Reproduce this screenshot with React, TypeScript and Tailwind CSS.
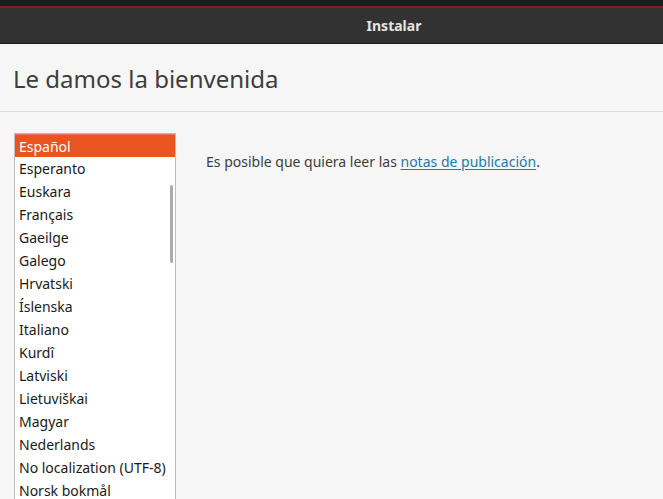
import React from "react";

const langs = [
  "Español",
  "Esperanto",
  "Euskara",
  "Français",
  "Gaeilge",
  "Galego",
  "Hrvatski",
  "Íslenska",
  "Italiano",
  "Kurdî",
  "Latviski",
  "Lietuviškai",
  "Magyar",
  "Nederlands",
  "No localization (UTF-8)",
  "Norsk bokmål",
  "Norsk nynorsk",
];

export default function App() {
  return (
    <div
      className="w-[663px] h-[499px] overflow-hidden flex flex-col bg-[#f6f6f6]"
      style={{ fontFamily: '"Noto Sans", "Open Sans", sans-serif' }}
    >
      <div className="h-[6px] bg-[#1d1d1d] shrink-0" />
      <div className="h-[2px] bg-[#7d1f22] shrink-0" />
      <div className="h-[36px] shrink-0 bg-[#323232] border-b border-[#1c1c1c] flex items-center overflow-hidden">
        <div className="w-[788px] shrink-0 text-center text-[14px] font-bold text-[#e4e4e4]">
          Instalar
        </div>
      </div>
      <div className="h-[68px] shrink-0 border-b border-[#dcdcdc] flex items-center pl-[13px] pt-[2px]">
        <h1 className="text-[24px] text-[#3d3d3d] font-normal">Le damos la bienvenida</h1>
      </div>
      <div className="flex items-start shrink-0 pt-[21px] pl-[14px]">
        <div className="relative w-[162px] h-[420px] shrink-0 border border-[#bdbdbd] bg-white overflow-hidden">
          <div className="flex flex-col">
            {langs.map((l, i) => (
              <div
                key={l}
                className={
                  i === 0
                    ? "h-[23px] shrink-0 pl-[4px] flex items-center text-[14px] text-white bg-[#e95420] border-t border-[#e9734c]"
                    : "h-[23px] shrink-0 pl-[4px] flex items-center text-[14px] text-[#1a1a1a]"
                }
              >
                {l}
              </div>
            ))}
          </div>
          <div className="absolute right-[2px] top-[51px] w-[3px] h-[78px] rounded-full bg-[#acacac]" />
        </div>
        <div className="pl-[30px] pt-[18px] text-[14px] text-[#3d3d3d]">
          Es posible que quiera leer las{" "}
          <span className="text-[#1b7aab] underline underline-offset-2">notas de publicación</span>.
        </div>
      </div>
    </div>
  );
}
